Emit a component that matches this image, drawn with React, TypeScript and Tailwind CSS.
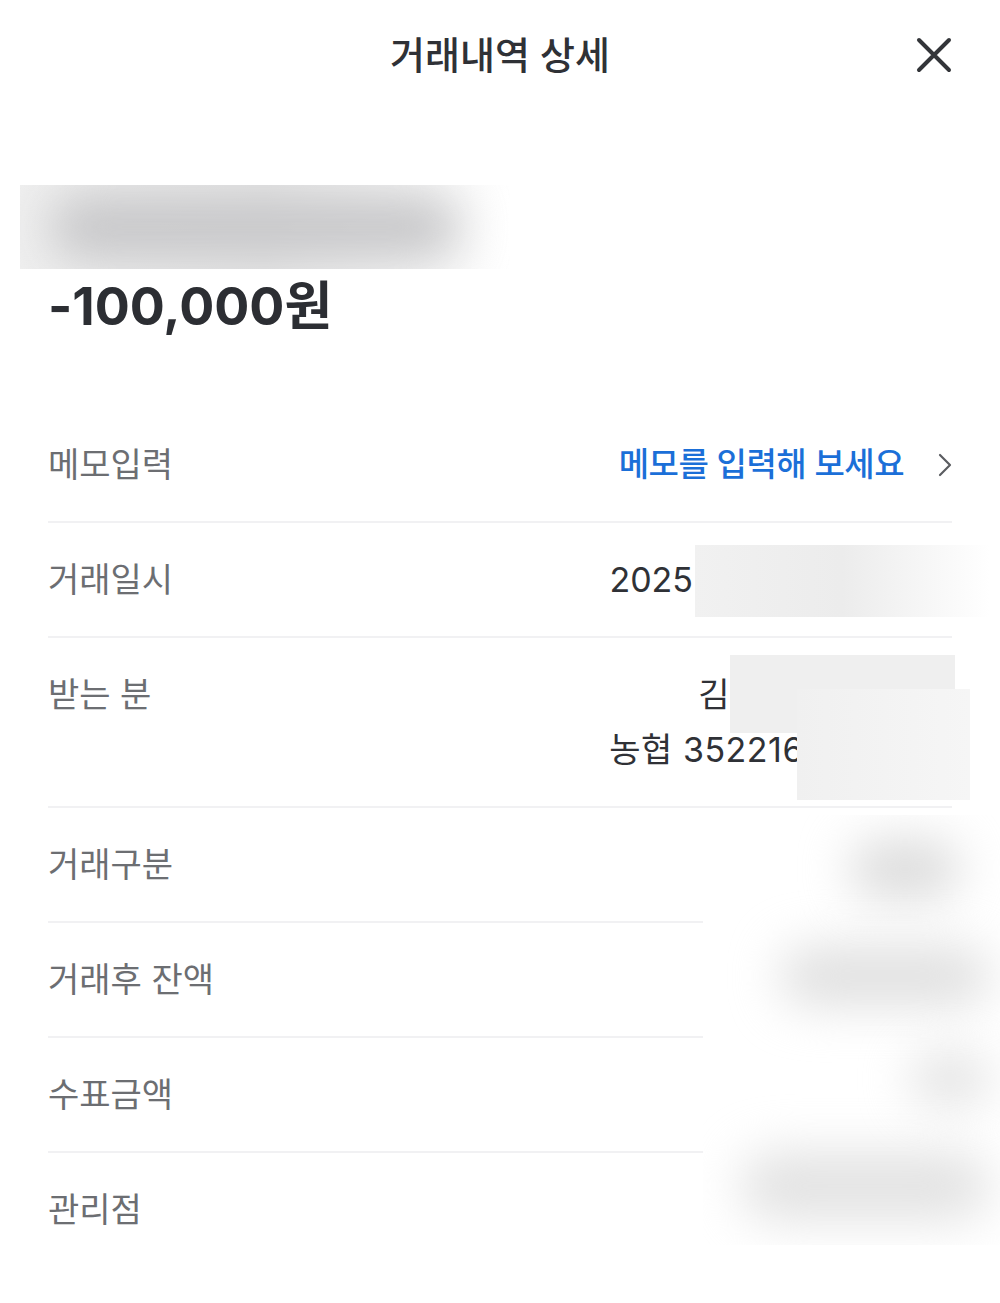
import { ReactNode } from "react";

const font = { fontFamily: 'Inter, "Noto Sans CJK KR", "Noto Sans", sans-serif' };

const Row = ({ label, children }: { label: string; children?: ReactNode }) => {
  return (
    <div className="flex items-start justify-between border-b-2 border-[#f1f1f3] py-[39px]">
      <span className="text-[34px] leading-[35px] text-[#6c6e72]">{label}</span>
      {children}
    </div>
  );
};

const App = () => {
  return (
    <div className="relative h-[1303px] w-[1000px] overflow-hidden bg-white" style={font}>
      {/* header */}
      <header className="relative flex h-[110px] items-center justify-center">
        <h1 className="text-[38px] font-medium text-[#2f3136]">거래내역 상세</h1>
        <button className="absolute right-[48px] top-[37px]">
          <svg width="36" height="36" viewBox="0 0 36 36" fill="none">
            <path d="M3 3L33 33M33 3L3 33" stroke="#333539" strokeWidth="4" strokeLinecap="round" />
          </svg>
        </button>
      </header>

      {/* account name, hidden */}
      <div className="ml-[20px] mt-[75px] flex h-[84px] w-[490px] items-center overflow-hidden bg-linear-to-r from-[#efefef] via-[#e8e8e8] to-white pl-[30px]">
        <div className="h-[62px] w-[410px] rounded-full bg-[#c6c6c8] blur-xl" />
      </div>

      <p className="ml-[48px] mt-[6px] text-[52px] font-bold leading-[64px] text-[#2c2e33]">-100,000원</p>

      <div className="mx-[48px] mt-[69px]">
        <Row label="메모입력">
          <div className="flex items-center gap-[34px]">
            <span className="text-[33px] font-medium leading-[35px] tracking-[-0.5px] text-[#1b6fd8]">
              메모를 입력해 보세요
            </span>
            <svg width="14" height="24" viewBox="0 0 14 24" fill="none">
              <path d="M2 2L12 12L2 22" stroke="#5b5d61" strokeWidth="2.2" strokeLinecap="round" strokeLinejoin="round" />
            </svg>
          </div>
        </Row>
        <Row label="거래일시">
          <span className="mr-[259px] text-[34px] leading-[35px] text-[#2f3136]">2025</span>
        </Row>
        <Row label="받는 분">
          <div className="mr-[148px] flex flex-col items-end gap-[20px] text-[34px] leading-[35px] tracking-[0.5px] text-[#2f3136]">
            <span className="mr-[74px]">김</span>
            <span>농협 352216</span>
          </div>
        </Row>
        <Row label="거래구분" />
        <Row label="거래후 잔액" />
        <Row label="수표금액" />
        <div className="py-[39px]">
          <span className="text-[34px] leading-[35px] text-[#6c6e72]">관리점</span>
        </div>
      </div>

      {/* redacted values laid over the rows */}
      <div className="absolute left-[695px] top-[545px] h-[72px] w-[295px] bg-linear-to-r from-[#f1f1f1] via-[#ececec] to-white" />
      <div className="absolute left-[730px] top-[655px] h-[78px] w-[225px] bg-[#efefef]" />
      <div className="absolute left-[797px] top-[689px] h-[111px] w-[173px] bg-linear-to-r from-[#f0f0f0] to-[#f6f6f6]" />
      <div className="absolute left-[703px] top-[815px] flex h-[430px] w-[297px] flex-col items-end justify-around overflow-hidden bg-white pr-[10px]">
        <div className="mr-[30px] h-[60px] w-[110px] rounded-full bg-[#dcdcdc] blur-xl" />
        <div className="h-[60px] w-[210px] rounded-full bg-[#e0e0e0] blur-xl" />
        <div className="h-[50px] w-[80px] rounded-full bg-[#e2e2e2] blur-xl" />
        <div className="h-[70px] w-[250px] rounded-full bg-[#e3e3e3] blur-xl" />
      </div>
    </div>
  );
};

export default App;
